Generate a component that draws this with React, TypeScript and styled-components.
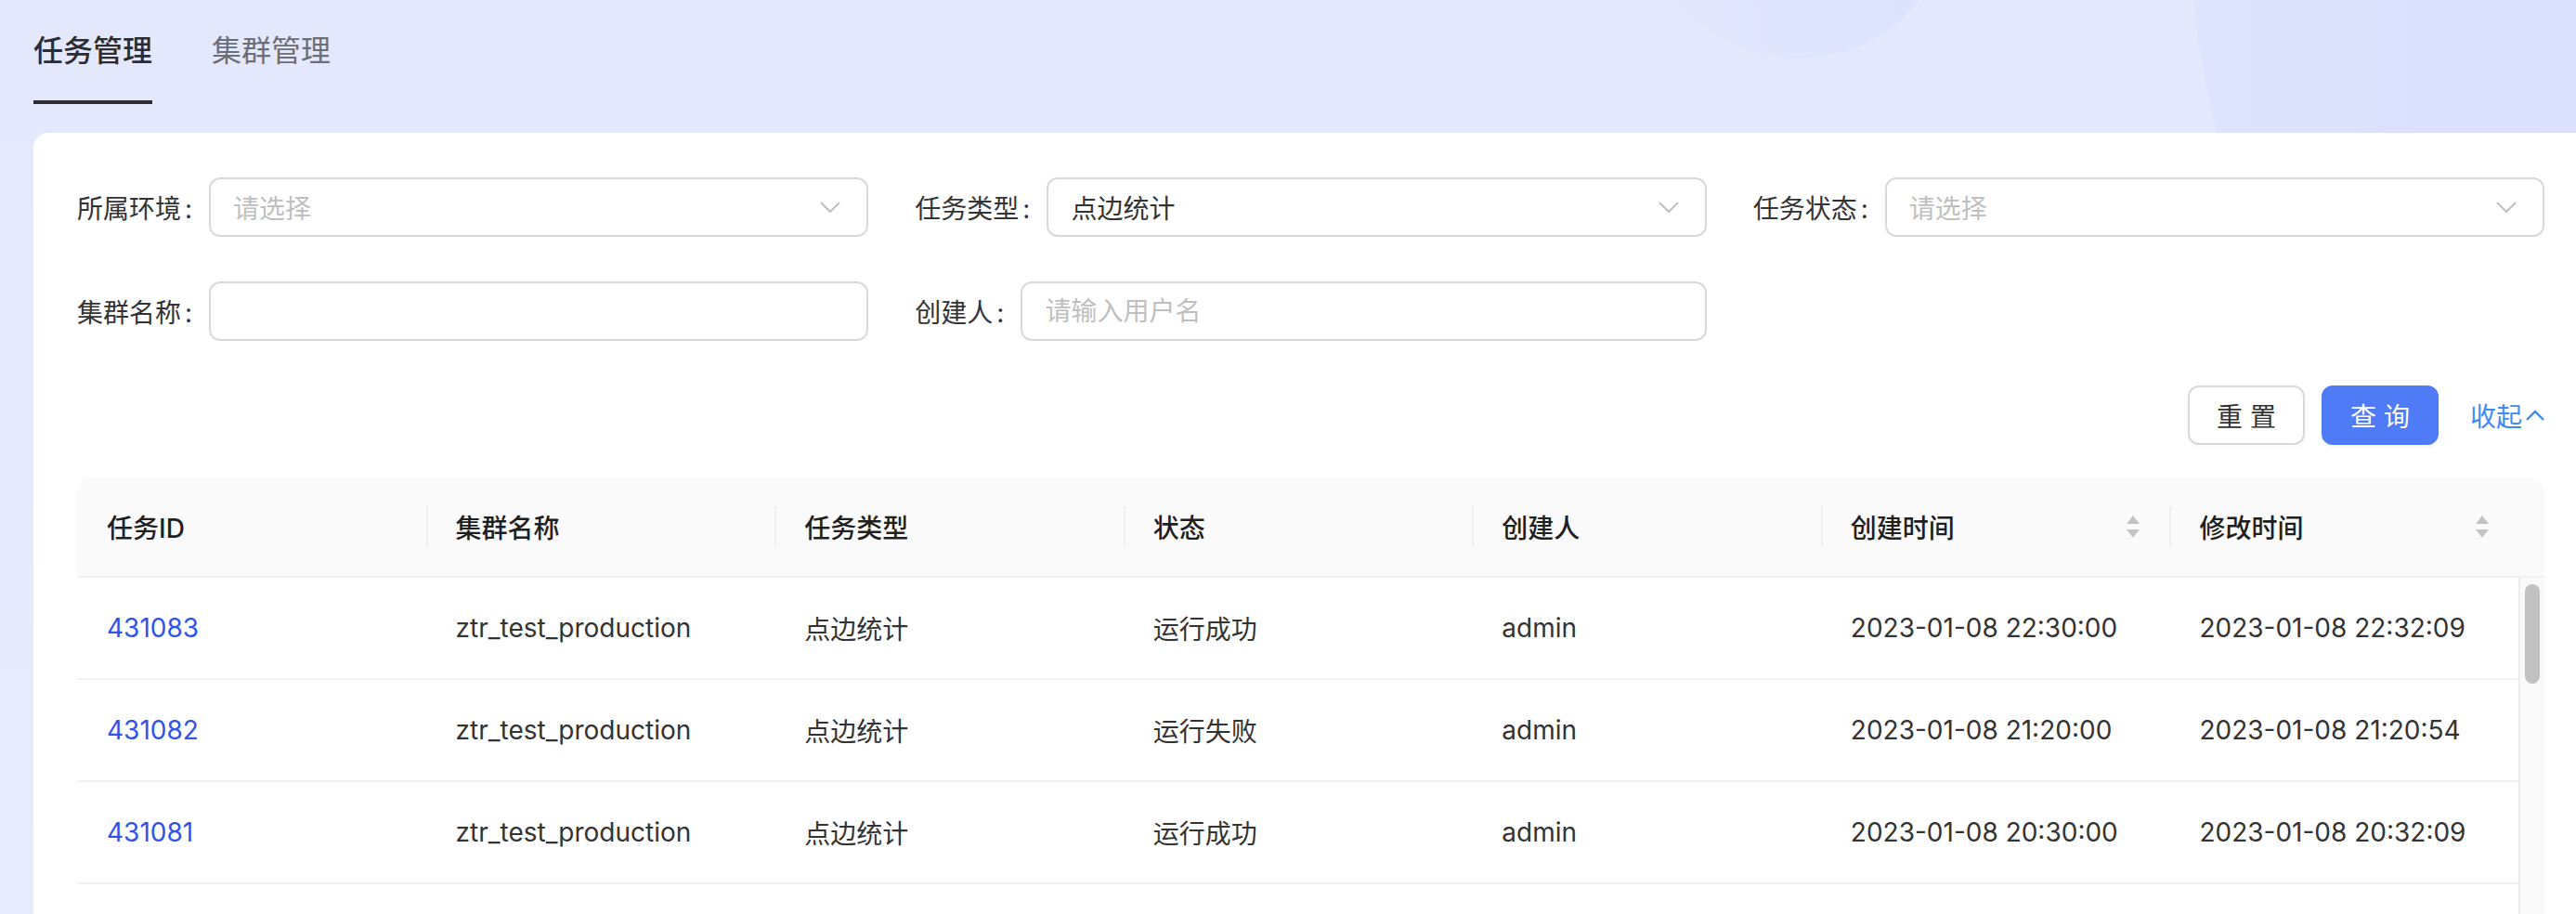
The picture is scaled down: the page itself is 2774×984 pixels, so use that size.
import React from 'react';
import styled, { createGlobalStyle } from 'styled-components';

const GlobalStyle = createGlobalStyle`
  html, body {
    margin: 0;
    padding: 0;
    overflow: hidden;
  }
  body {
    font-family: Inter, "Noto Sans CJK SC", sans-serif;
    color: #333;
  }
  * {
    box-sizing: border-box;
  }
`;

type Task = {
  id: string;
  cluster: string;
  type: string;
  status: string;
  creator: string;
  created: string;
  modified: string;
};

const tasks: Task[] = [
  { id: '431083', cluster: 'ztr_test_production', type: '点边统计', status: '运行成功', creator: 'admin', created: '2023-01-08 22:30:00', modified: '2023-01-08 22:32:09' },
  { id: '431082', cluster: 'ztr_test_production', type: '点边统计', status: '运行失败', creator: 'admin', created: '2023-01-08 21:20:00', modified: '2023-01-08 21:20:54' },
  { id: '431081', cluster: 'ztr_test_production', type: '点边统计', status: '运行成功', creator: 'admin', created: '2023-01-08 20:30:00', modified: '2023-01-08 20:32:09' },
];

const columns = [
  { title: '任务ID' },
  { title: '集群名称' },
  { title: '任务类型' },
  { title: '状态' },
  { title: '创建人' },
  { title: '创建时间', sortable: true },
  { title: '修改时间', sortable: true },
];

const ChevronDown = () => (
  <svg width="22" height="12" viewBox="0 0 22 12" fill="none">
    <polyline points="1,1 11,11 21,1" stroke="#bfbfbf" strokeWidth="2" />
  </svg>
);

const ChevronUp = () => (
  <svg width="20" height="12" viewBox="0 0 20 12" fill="none">
    <polyline points="1,11 10,2 19,11" stroke="#3d8bf2" strokeWidth="2.4" />
  </svg>
);

const SortIcon = () => (
  <svg width="14" height="24" viewBox="0 0 14 24">
    <polygon points="7,0 14,9 0,9" fill="#c4c4c4" />
    <polygon points="0,15 14,15 7,24" fill="#c4c4c4" />
  </svg>
);

const App = () => {
  return (
    <>
      <GlobalStyle />
      <Page>
        <SmallBlob />
        <BigBlob />
        <TabBar>
          <Tab $active>任务管理</Tab>
          <Tab>集群管理</Tab>
        </TabBar>
        <Card>
          {/* -------- 查询条件 -------- */}
          <FormGrid>
            <FormItem>
              <Label>所属环境</Label>
              <Select>
                <Placeholder>请选择</Placeholder>
                <ChevronDown />
              </Select>
            </FormItem>
            <FormItem>
              <Label>任务类型</Label>
              <Select>
                <span>点边统计</span>
                <ChevronDown />
              </Select>
            </FormItem>
            <FormItem>
              <Label>任务状态</Label>
              <Select>
                <Placeholder>请选择</Placeholder>
                <ChevronDown />
              </Select>
            </FormItem>
            <FormItem>
              <Label>集群名称</Label>
              <Input type="text" />
            </FormItem>
            <FormItem>
              <Label>创建人</Label>
              <Input type="text" placeholder="请输入用户名" />
            </FormItem>
          </FormGrid>
          <Actions>
            <Button>重 置</Button>
            <Button $primary>查 询</Button>
            <Toggle>
              收起
              <ChevronUp />
            </Toggle>
          </Actions>

          {/* -------- 任务列表 -------- */}
          <Table>
            <HeadRow>
              {columns.map((c) => (
                <HeadCell key={c.title}>
                  <span>{c.title}</span>
                  {c.sortable && <SortIcon />}
                </HeadCell>
              ))}
              <div />
            </HeadRow>
            <BodyWrap>
              <Rows>
                {tasks.map((t) => (
                  <Row key={t.id}>
                    <Cell>
                      <IdLink>{t.id}</IdLink>
                    </Cell>
                    <Cell>{t.cluster}</Cell>
                    <Cell>{t.type}</Cell>
                    <Cell>{t.status}</Cell>
                    <Cell>{t.creator}</Cell>
                    <Cell>{t.created}</Cell>
                    <Cell>{t.modified}</Cell>
                  </Row>
                ))}
              </Rows>
              <ScrollTrack>
                <ScrollThumb />
              </ScrollTrack>
            </BodyWrap>
          </Table>
        </Card>
      </Page>
    </>
  );
};

export default App;

const Page = styled.div`
  position: relative;
  height: 100vh;
  overflow: hidden;
  padding-left: 36px;
  display: flex;
  flex-direction: column;
  background: linear-gradient(180deg, #e3e8fd 0%, #e7ebfd 100%);
`;

// 배경 장식 원
const SmallBlob = styled.div`
  position: absolute;
  left: 1771px;
  top: -269px;
  width: 332px;
  height: 332px;
  border-radius: 50%;
  background: linear-gradient(90deg, rgba(221, 227, 253, 0) 0%, #dbe2fd 100%);
  pointer-events: none;
`;

const BigBlob = styled.div`
  position: absolute;
  left: 2357px;
  top: -1100px;
  width: 2000px;
  height: 2000px;
  border-radius: 50%;
  background: linear-gradient(90deg, #dfe4fd 0%, #d6ddfc 30%);
  pointer-events: none;
`;

const TabBar = styled.div`
  position: relative;
  z-index: 1;
  flex-shrink: 0;
  display: flex;
  gap: 64px;
  height: 112px;
`;

const Tab = styled.div<{ $active?: boolean }>`
  padding-top: 33px;
  font-size: 32px;
  line-height: 44px;
  color: ${(p) => (p.$active ? '#2b2d33' : '#6b6e75')};
  font-weight: ${(p) => (p.$active ? 500 : 400)};
  border-bottom: 4px solid ${(p) => (p.$active ? '#2b2d33' : 'transparent')};
`;

const Card = styled.div`
  position: relative;
  z-index: 1;
  flex: 1 0 auto;
  display: flex;
  flex-direction: column;
  margin-top: 31px;
  padding: 48px 34px 0 47px;
  background: #fff;
  border-top-left-radius: 16px;
`;

const FormGrid = styled.div`
  display: grid;
  grid-template-columns: repeat(3, 1fr);
  column-gap: 50px;
  row-gap: 48px;
`;

const FormItem = styled.div`
  display: flex;
  align-items: center;
  min-width: 0;
`;

const Label = styled.label`
  font-size: 28px;
  color: #333;
  white-space: nowrap;
  &::after {
    content: ':';
    margin: 0 18px 0 4px;
  }
`;

const Select = styled.div`
  flex: 1;
  height: 64px;
  display: flex;
  align-items: center;
  justify-content: space-between;
  padding: 0 28px 0 24px;
  border: 2px solid #d9d9d9;
  border-radius: 12px;
  font-size: 28px;
  color: #333;
`;

const Placeholder = styled.span`
  color: #bfbfbf;
`;

const Input = styled.input`
  flex: 1;
  min-width: 0;
  height: 64px;
  padding: 0 24px;
  border: 2px solid #d9d9d9;
  border-radius: 12px;
  font-family: inherit;
  font-size: 28px;
  color: #333;
  outline: none;
  &::placeholder {
    color: #bfbfbf;
  }
`;

const Actions = styled.div`
  display: flex;
  justify-content: flex-end;
  align-items: center;
  margin-top: 48px;
`;

const Button = styled.button<{ $primary?: boolean }>`
  width: 126px;
  height: 64px;
  margin-right: 18px;
  font-family: inherit;
  font-size: 28px;
  border-radius: 12px;
  border: 2px solid ${(p) => (p.$primary ? '#4f7bf7' : '#d9d9d9')};
  background: ${(p) => (p.$primary ? '#4f7bf7' : '#fff')};
  color: ${(p) => (p.$primary ? '#fff' : '#333')};
  box-shadow: 0 4px 0 rgba(0, 0, 0, 0.02);
  white-space: pre;
`;

const Toggle = styled.a`
  display: flex;
  align-items: center;
  gap: 4px;
  margin-left: 16px;
  font-size: 28px;
  color: #3d8bf2;
  cursor: pointer;
`;

const Table = styled.div`
  flex: 1;
  display: flex;
  flex-direction: column;
  margin-top: 35px;
`;

const HeadRow = styled.div`
  flex-shrink: 0;
  display: grid;
  grid-template-columns: repeat(7, 1fr) 28px;
  height: 108px;
  background: #fafafa;
  border-bottom: 2px solid #f0f0f0;
  border-radius: 16px 16px 0 0;
`;

const HeadCell = styled.div`
  position: relative;
  display: flex;
  align-items: center;
  justify-content: space-between;
  padding: 0 32px;
  font-size: 28px;
  font-weight: 500;
  color: #1f1f1f;
  &:not(:first-child)::before {
    content: '';
    position: absolute;
    left: 0;
    top: 50%;
    transform: translateY(-50%);
    width: 2px;
    height: 44px;
    background: #f0f0f0;
  }
`;

const BodyWrap = styled.div`
  flex: 1;
  display: flex;
`;

const Rows = styled.div`
  flex: 1;
`;

const Row = styled.div`
  display: grid;
  grid-template-columns: repeat(7, 1fr);
  align-items: center;
  height: 110px;
  border-bottom: 2px solid #f0f0f0;
`;

const Cell = styled.div`
  padding: 0 32px;
  font-size: 28px;
  color: #333;
  white-space: nowrap;
`;

const IdLink = styled.a`
  color: #2f54eb;
  cursor: pointer;
`;

const ScrollTrack = styled.div`
  width: 28px;
  display: flex;
  justify-content: center;
  align-items: flex-start;
  padding-top: 7px;
  background: #fafafa;
  border-left: 2px solid #ececec;
`;

const ScrollThumb = styled.div`
  width: 16px;
  height: 107px;
  border-radius: 8px;
  background: #c1c1c1;
`;
